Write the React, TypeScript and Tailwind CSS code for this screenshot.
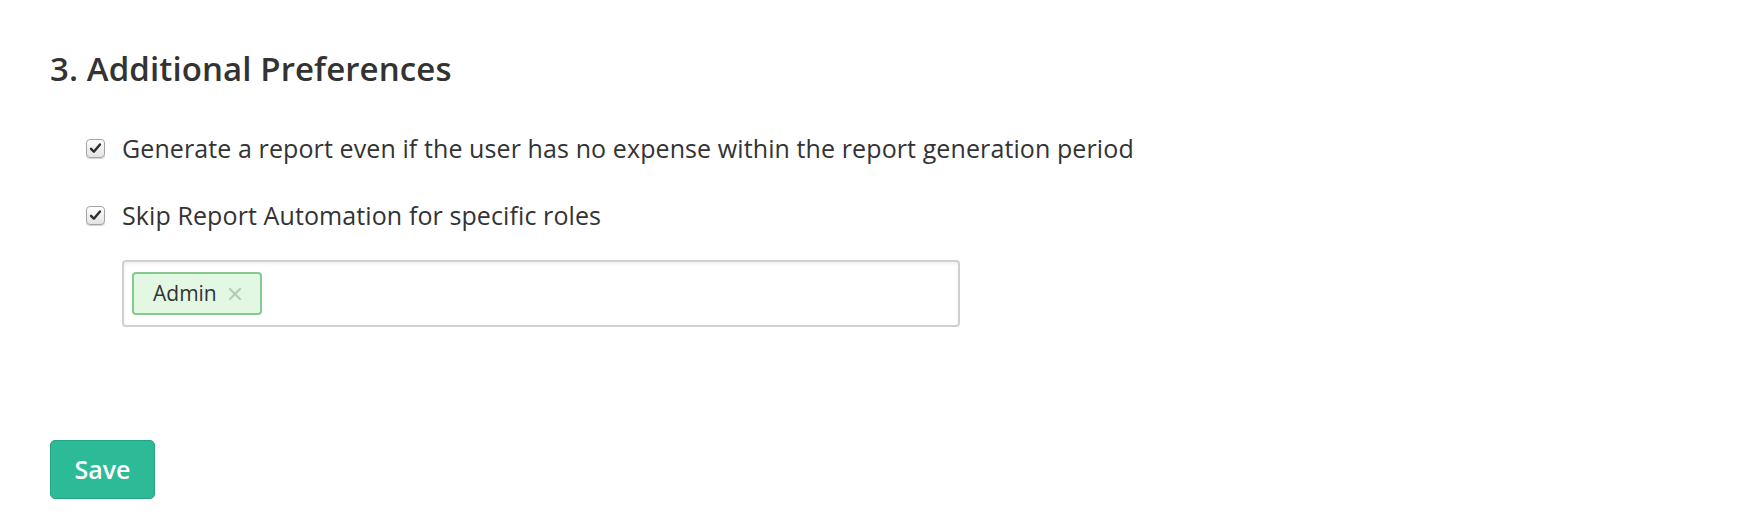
import React, { useState } from 'react';

const Check: React.FC<{ checked: boolean; onChange: () => void }> = ({ checked, onChange }) => (
  <button
    type="button"
    onClick={onChange}
    className="w-[19px] h-[19px] shrink-0 rounded-[4px] border border-[#a4a4a4] bg-gradient-to-b from-white to-[#e2e2e2] shadow-[0_1px_1px_rgba(0,0,0,0.18)] flex items-center justify-center"
  >
    {checked && (
      <svg viewBox="0 0 16 16" className="w-[13px] h-[13px]">
        <path d="M2.5 8.5 L6 12 L13.5 3" fill="none" stroke="#2e2e2e" strokeWidth="3" strokeLinecap="round" strokeLinejoin="round" />
      </svg>
    )}
  </button>
);

export default function App() {
  const [emptyReport, setEmptyReport] = useState(true);
  const [skipRoles, setSkipRoles] = useState(true);
  const [roles, setRoles] = useState<string[]>(['Admin']);

  return (
    <div className="min-h-[518px] bg-white text-[#333] pl-[50px] pt-[49px]" style={{ fontFamily: '"Open Sans", Lato, sans-serif' }}>
      <h2 className="text-[33px] leading-[40px] font-semibold tracking-[0.1px]">3. Additional Preferences</h2>

      <div className="pl-[36px] mt-[47px] flex flex-col gap-[43px]">
        <label className="flex items-center gap-[17px] h-[24px] text-[25px] leading-[24px] tracking-[0.1px]">
          <Check checked={emptyReport} onChange={() => setEmptyReport(!emptyReport)} />
          <span>Generate a report even if the user has no expense within the report generation period</span>
        </label>
        <label className="flex items-center gap-[17px] h-[24px] text-[25px] leading-[24px] tracking-[0.1px]">
          <Check checked={skipRoles} onChange={() => setSkipRoles(!skipRoles)} />
          <span>Skip Report Automation for specific roles</span>
        </label>
      </div>

      <div className="ml-[72px] mt-[33px] w-[838px] h-[67px] border-2 border-[#d0d0d0] rounded-[4px] shadow-[inset_0_2px_3px_rgba(0,0,0,0.06)] flex items-center px-[8px] gap-2">
        {roles.map((r) => (
          <span key={r} className="h-[43px] flex items-center gap-[11px] pl-[19px] pr-[18px] bg-[#e3f8e3] border-2 border-[#86c98e] rounded-[4px] text-[21px]">
            {r}
            <button type="button" onClick={() => setRoles(roles.filter((x) => x !== r))} className="flex items-center">
              <svg viewBox="0 0 14 14" className="w-[14px] h-[14px]">
                <path d="M2 2 L12 12 M12 2 L2 12" stroke="#b4cbb4" strokeWidth="2.2" strokeLinecap="round" />
              </svg>
            </button>
          </span>
        ))}
      </div>

      <button
        type="button"
        className="mt-[113px] w-[105px] h-[59px] rounded-[5px] bg-[#2dba96] border border-[#24a584] text-white text-[25px] font-semibold"
      >
        Save
      </button>
    </div>
  );
}
